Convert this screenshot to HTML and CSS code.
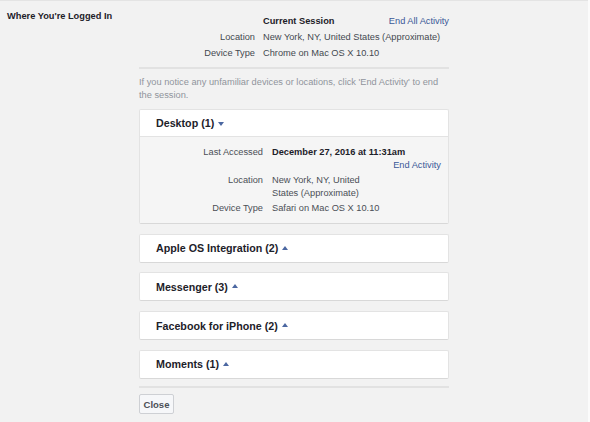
FILE: index.html
```html
<!DOCTYPE html>
<html>
<head>
<meta charset="utf-8">
<link rel="stylesheet" href="styles.css">
</head>
<body>
<div class="page">
  <div class="side">Where You're Logged In</div>
  <div class="main">
    <div class="current">
      <div class="lbl"></div>
      <div class="val strong">Current Session</div>
      <a class="link">End All Activity</a>
      <div class="lbl">Location</div>
      <div class="val wide">New York, NY, United States (Approximate)</div>
      <div class="lbl">Device Type</div>
      <div class="val wide">Chrome on Mac OS X 10.10</div>
    </div>
    <div class="sep"></div>
    <p class="note">If you notice any unfamiliar devices or locations, click 'End Activity' to end the session.</p>

    <div class="card open">
      <div class="card-head">Desktop (1) <span class="caret down"></span></div>
      <div class="card-body">
        <div class="row">
          <div class="blbl">Last Accessed</div>
          <div class="bval strong nowrap">December 27, 2016 at 11:31am</div>
        </div>
        <div class="row">
          <div class="blbl"></div>
          <div class="bval end"><a class="link">End Activity</a></div>
        </div>
        <div class="row spaced">
          <div class="blbl">Location</div>
          <div class="bval narrow">New York, NY, United States (Approximate)</div>
        </div>
        <div class="row spaced">
          <div class="blbl">Device Type</div>
          <div class="bval">Safari on Mac OS X 10.10</div>
        </div>
      </div>
    </div>

    <div class="card">
      <div class="card-head">Apple OS Integration (2) <span class="caret up"></span></div>
    </div>
    <div class="card">
      <div class="card-head">Messenger (3) <span class="caret up"></span></div>
    </div>
    <div class="card">
      <div class="card-head">Facebook for iPhone (2) <span class="caret up"></span></div>
    </div>
    <div class="card">
      <div class="card-head">Moments (1) <span class="caret up"></span></div>
    </div>

    <div class="sep bottom"></div>
    <button class="close">Close</button>
  </div>
</div>
</body>
</html>
```
FILE: styles.css
```css
* { box-sizing: border-box; }
html, body {
  margin: 0;
  padding: 0;
  background: #fbfbfb;
}
body {
  font-family: "Liberation Sans", Arial, sans-serif;
  font-size: 9.25px;
  color: #4b4f56;
}
.page {
  width: 588px;
  height: 422px;
  background: #f2f2f2;
  border-top: 1px solid #e4e4e4;
  display: flex;
  overflow: hidden;
}
.side {
  width: 139px;
  padding: 9px 0 0 7px;
  font-weight: bold;
  color: #1d2129;
  line-height: 12px;
}
.main {
  width: 310px;
  padding-top: 12px;
}
.current {
  display: grid;
  grid-template-columns: 116px auto 1fr;
  column-gap: 8px;
  line-height: 16px;
}
.current .wide { grid-column: 2 / 4; }
.lbl { text-align: right; color: #444950; }
.val { color: #444950; white-space: nowrap; }
.strong { font-weight: bold; color: #1d2129; }
.link {
  color: #3b5998;
  text-align: right;
  cursor: pointer;
}
.sep {
  height: 2px;
  background: #e2e2e2;
  margin-top: 6px;
}
.note {
  margin: 7px 0 7px;
  color: #90949c;
  line-height: 13px;
}
.card {
  background: #fff;
  border: 1px solid #e3e3e3;
  border-bottom-color: #d8d8d8;
  border-radius: 2px;
  margin-bottom: 9.7px;
}
.card-head {
  height: 27px;
  padding-left: 16px;
  display: flex;
  align-items: center;
  font-weight: bold;
  font-size: 10.7px;
  color: #1d2129;
}
.caret {
  display: inline-block;
  width: 0;
  height: 0;
  margin-left: 4px;
  border-left: 3.5px solid transparent;
  border-right: 3.5px solid transparent;
}
.caret.down { border-top: 4px solid #4b67a1; margin-top: 1px; }
.caret.up { border-bottom: 4px solid #4b67a1; margin-top: -1px; }
.card.open .card-head { border-bottom: 1px solid #e3e3e3; }
.card-body {
  background: #f5f5f5;
  padding: 9px 7px 8px 0;
}
.row {
  display: flex;
  line-height: 13px;
}
.row.spaced { margin-top: 2px; }
.blbl {
  width: 123px;
  flex: none;
  text-align: right;
}
.bval {
  margin-left: 9px;
  flex: 1;
}
.bval.end { text-align: right; }
.nowrap { white-space: nowrap; }
.narrow { max-width: 100px; }
.sep.bottom { margin-top: -2px; margin-bottom: 6px; }
.close {
  font-family: "Liberation Sans", Arial, sans-serif;
  font-size: 9.5px;
  font-weight: bold;
  color: #4b4f56;
  background: #f6f7f9;
  border: 1px solid #ced0d4;
  border-radius: 2px;
  height: 20px;
  width: 35px;
  padding: 0;
}
```
